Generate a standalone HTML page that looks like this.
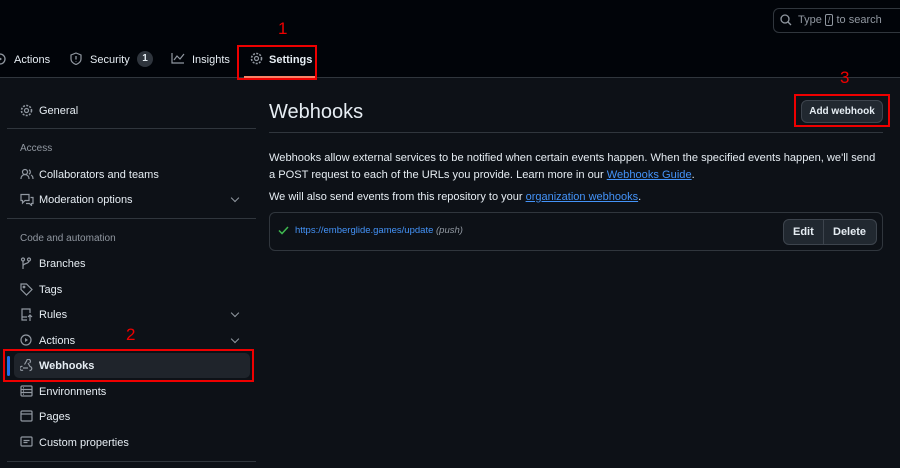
<!DOCTYPE html><html><head><style>
body{margin:0;width:900px;height:468px;background:#0d1117;font-family:"Liberation Sans",sans-serif;color:#e6edf3;position:relative;overflow:hidden;font-size:11px}
.a{position:absolute;white-space:nowrap}
.hdr{position:absolute;left:0;top:0;width:900px;height:77px;background:#010409;border-bottom:1px solid #30363d}
svg.i{position:absolute;left:20px;fill:none;stroke:#9198a1;stroke-width:1.2}
.sep{position:absolute;left:7px;width:249px;height:1px;background:#30363d}
.chev{position:absolute;left:232px;width:5px;height:5px;border-right:1.3px solid #9198a1;border-bottom:1.3px solid #9198a1;transform:rotate(45deg)}
.red{position:absolute;border:2px solid #e00;box-sizing:border-box}
.rn{position:absolute;color:#e00;font-size:17px}
a{color:#4493f8;text-decoration:underline}
</style></head><body>
<div class="hdr"></div>
<div class="a" style="left:773px;top:8px;width:140px;height:25px;border:1px solid #30363d;border-radius:6px;box-sizing:border-box"></div>
<svg class="a" style="left:780px;top:14px" width="12" height="12"><circle cx="5" cy="5" r="4" stroke="#9198a1" stroke-width="1.3" fill="none"/><path d="M8 8l3 3" stroke="#9198a1" stroke-width="1.3"/></svg>
<div class="a" style="left:798px;top:14px;color:#9198a1">Type <span style="border:1px solid #9198a1;border-radius:2px;padding:0 2px;font-size:9px">/</span> to search</div>
<svg class="a" style="left:-6px;top:53px" width="12" height="12"><circle cx="6" cy="6" r="5" stroke="#9198a1" stroke-width="1.3" fill="none"/><path d="M5 4l3 2-3 2z" fill="#9198a1"/></svg>
<div class="a" style="left:14px;top:54px">Actions</div>
<svg class="a" style="left:70px;top:52px" width="12" height="13"><path d="M6 1l5 2v4c0 3-2.5 4.5-5 5.5C3.5 11.5 1 10 1 7V3z" stroke="#9198a1" stroke-width="1.2" fill="none"/><path d="M6 4v3.5M6 9v.5" stroke="#9198a1" stroke-width="1.3"/></svg>
<div class="a" style="left:90px;top:54px">Security</div>
<div class="a" style="left:137px;top:51px;width:16px;height:16px;border-radius:8px;background:#2f353d;text-align:center;line-height:16px;font-size:10px;font-weight:bold">1</div>
<svg class="a" style="left:171px;top:52px" width="14" height="12"><path d="M1 1v10h12M3 8l3-4 3 3 4-5" stroke="#9198a1" stroke-width="1.2" fill="none"/></svg>
<div class="a" style="left:192px;top:54px">Insights</div>
<svg class="a" style="left:250px;top:52px" width="13" height="13"><circle cx="6.5" cy="6.5" r="2" stroke="#9198a1" stroke-width="1.2" fill="none"/><circle cx="6.5" cy="6.5" r="5" stroke="#9198a1" stroke-width="1.6" stroke-dasharray="2 1.3" fill="none"/></svg>
<div class="a" style="left:269px;top:54px;font-weight:bold">Settings</div>
<div class="a" style="left:244px;top:76px;width:72px;height:2px;background:#f78166"></div>
<div class="red" style="left:237px;top:45px;width:80px;height:35px"></div>
<div class="rn" style="left:278px;top:19px">1</div>

<svg class="i" style="top:104px" width="13" height="13"><circle cx="6.5" cy="6.5" r="2"/><circle cx="6.5" cy="6.5" r="5" stroke-width="1.6" stroke-dasharray="2 1.3"/></svg>
<div class="a" style="left:39px;top:105px">General</div>
<div class="sep" style="top:128px"></div>
<div class="a" style="left:20px;top:143px;color:#9198a1;font-size:10px">Access</div>
<svg class="i" style="top:168px" width="14" height="12"><circle cx="5" cy="4" r="2.5"/><path d="M1 11c0-3 2-4.5 4-4.5s4 1.5 4 4.5M9 1.8a2.5 2.5 0 010 4.4M11 7c1.3.7 2 2 2 4"/></svg>
<div class="a" style="left:39px;top:169px">Collaborators and teams</div>
<svg class="i" style="top:193px" width="14" height="13"><path d="M1 1.5h8v6H5l-2.5 2.5V7.5H1zM10.5 4.5h2.5v6h-1.5v2l-2-2H6"/></svg>
<div class="a" style="left:39px;top:194px">Moderation options</div>
<div class="chev" style="top:195px"></div>
<div class="sep" style="top:218px"></div>
<div class="a" style="left:20px;top:233px;color:#9198a1;font-size:10px">Code and automation</div>
<svg class="i" style="top:257px" width="12" height="13"><circle cx="3" cy="2.5" r="1.5"/><circle cx="9" cy="2.5" r="1.5"/><path d="M3 4v8M9 4c0 3-6 2-6 5"/></svg>
<div class="a" style="left:39px;top:258px">Branches</div>
<svg class="i" style="top:283px" width="13" height="13"><path d="M1 1h5.5l5.5 5.5-5.5 5.5L1 6.5z"/><circle cx="4" cy="4" r=".8"/></svg>
<div class="a" style="left:39px;top:284px">Tags</div>
<svg class="i" style="top:308px" width="13" height="14"><path d="M7 12H2V1h8v4M2 9h5M10 13V7M8 9l2-2 2 2"/></svg>
<div class="a" style="left:39px;top:309px">Rules</div>
<div class="chev" style="top:310px"></div>
<svg class="i" style="top:334px" width="12" height="12"><circle cx="6" cy="6" r="5"/><path d="M5 4l3 2-3 2z" fill="#9198a1" stroke="none"/></svg>
<div class="a" style="left:39px;top:335px">Actions</div>
<div class="chev" style="top:336px"></div>
<div class="a" style="left:14px;top:353px;width:236px;height:25px;background:#1f242b;border-radius:5px"></div>
<div class="a" style="left:7px;top:356px;width:3px;height:20px;background:#1f6feb;border-radius:2px"></div>
<svg class="i" style="top:359px" width="13" height="13"><path d="M4.5 5.5L6.5 2a2 2 0 113 2M3 11a2 2 0 11-.5-3.5M3 9h5M9.5 11.5a2 2 0 10.5-4L8 4"/></svg>
<div class="a" style="left:39px;top:360px;font-weight:bold">Webhooks</div>
<div class="red" style="left:3px;top:349px;width:251px;height:33px"></div>
<div class="rn" style="left:126px;top:325px">2</div>
<svg class="i" style="top:385px" width="13" height="12"><rect x="1" y="1" width="11" height="10" rx="1"/><path d="M1 4.5h11M1 7.5h11M3 2.8h1M3 6h1M3 9.2h1"/></svg>
<div class="a" style="left:39px;top:386px">Environments</div>
<svg class="i" style="top:410px" width="13" height="12"><rect x="1" y="1" width="11" height="10" rx="1"/><path d="M1 4h11"/></svg>
<div class="a" style="left:39px;top:411px">Pages</div>
<svg class="i" style="top:436px" width="13" height="11"><rect x="1" y="1" width="11" height="9" rx="1"/><path d="M3.5 4.5h6M3.5 6.5h4"/></svg>
<div class="a" style="left:39px;top:437px">Custom properties</div>
<div class="sep" style="top:461px"></div>

<div class="a" style="left:269px;top:101px;font-size:20px">Webhooks</div>
<div class="a" style="left:269px;top:132px;width:614px;height:1px;background:#30363d"></div>
<div class="a" style="left:801px;top:100px;width:82px;height:23px;background:#212830;border:1px solid #3d444d;border-radius:6px;box-sizing:border-box;text-align:center;line-height:21px;font-size:10px;font-weight:bold">Add webhook</div>
<div class="red" style="left:794px;top:94px;width:96px;height:33px"></div>
<div class="rn" style="left:840px;top:68px">3</div>
<div class="a" style="left:269px;top:150px;line-height:17px;font-size:11.1px">Webhooks allow external services to be notified when certain events happen. When the specified events happen, we'll send<br>a POST request to each of the URLs you provide. Learn more in our <a>Webhooks Guide</a>.</div>
<div class="a" style="left:269px;top:191px">We will also send events from this repository to your <a>organization webhooks</a>.</div>
<div class="a" style="left:269px;top:212px;width:614px;height:39px;border:1px solid #30363d;border-radius:6px;box-sizing:border-box"></div>
<svg class="a" style="left:278px;top:226px" width="11" height="9"><path d="M1 4.5l3 3L10 1" stroke="#3fb950" stroke-width="1.5" fill="none"/></svg>
<div class="a" style="left:295px;top:225px;font-size:9.5px;color:#4493f8">https://emberglide.games/update <i style="color:#9198a1">(push)</i></div>
<div class="a" style="left:783px;top:219px;width:94px;height:26px;background:#212830;border:1px solid #3d444d;border-radius:6px;box-sizing:border-box"></div>
<div class="a" style="left:823px;top:220px;width:1px;height:24px;background:#3d444d"></div>
<div class="a" style="left:793px;top:226px;font-weight:bold">Edit</div>
<div class="a" style="left:833px;top:226px;font-weight:bold">Delete</div>
</body></html>
